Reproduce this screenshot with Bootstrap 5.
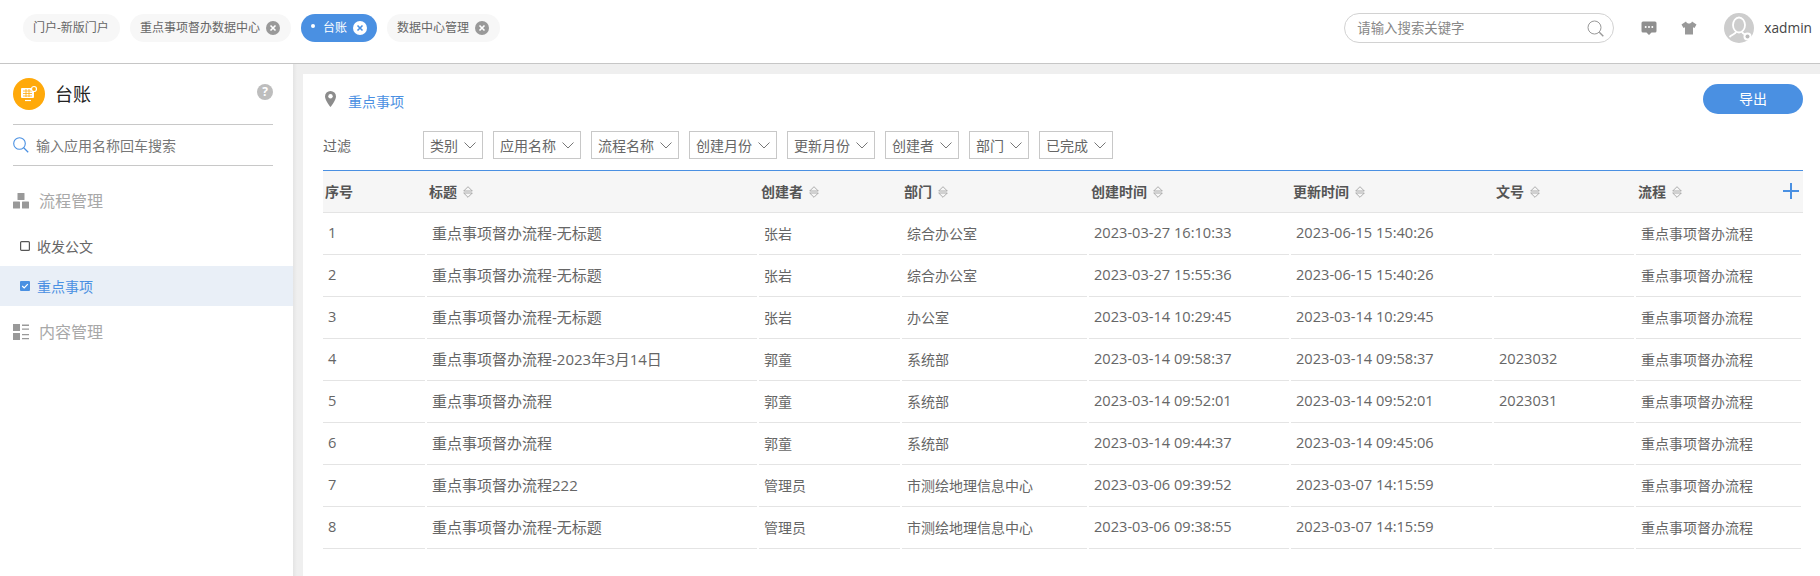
<!DOCTYPE html>
<html lang="zh-CN">
<head>
<meta charset="utf-8">
<title>台账</title>
<link rel="stylesheet" href="https://cdn.jsdelivr.net/npm/bootstrap@5.3.0/dist/css/bootstrap.min.css">
<style>
html,body{height:100%;overflow:hidden}
body{font-family:"Open Sans","Noto Sans CJK SC",sans-serif;font-size:14px;color:#666;background:#fff}
.topbar{height:64px;border-bottom:1px solid #c6c6c6;padding:14px 8px 0 23px}
.tabrow{column-gap:10px}
.tabpill{height:28px;border-radius:14px;background:#f7f7f7;color:#666;font-size:12px;padding:0 11px 0 10px;gap:6px;line-height:28px;white-space:nowrap}
.tabpill.on{background:#4a90e2;color:#fff;padding-right:10px}
.tabx{width:14px;height:14px;flex:none;display:block}
.dotm{width:4px;height:4px;border-radius:50%;background:#fff;margin-right:2px;margin-top:-4px}
.searchbox{width:270px;height:30px;border:1px solid #d2d2d2;border-radius:15px;margin-top:-1px;padding:0 9px 0 12px;color:#888;font-size:13.4px}
.topic{width:16px;height:16px;display:block}
.topicons{height:30px;margin:-1px 0 0 27px;gap:24px}
.userbox{height:30px;margin:-1px 0 0 27px;gap:10px}
.avatarx{width:30px;height:30px;display:block}
.uname{font-size:13.7px;color:#444}
.bodywrap{height:512px}
.sidepane{width:293px;flex:none;background:#fff}
.sidehead{height:61px;margin:0 20px 0 13px;border-bottom:1px solid #c8c8c8;gap:10px}
.logoc{width:32px;height:32px;border-radius:50%;background:#ffa90a;flex:none}
.sidetitle{font-size:18px;color:#222;line-height:32px}
.helpc{width:16px;height:16px;border-radius:50%;background:#bdbdbd;color:#fff;font-size:12px;font-weight:700;line-height:16px;text-align:center;margin-top:-4px}
.sidesearch{height:41px;margin:0 20px 0 13px;border-bottom:1px solid #c8c8c8;gap:7px;font-size:14px;color:#777}
.sec-title{height:20px;margin:25px 0 0 13px;gap:10px;font-size:16px;color:#a8a8a8}
.sec-title.sec-second{margin-top:16px}
.navspacer{height:15px}
.navrow{height:40px;padding-left:20px;gap:7px;font-size:14px;color:#666}
.navrow.active-row{background:#e9eff7;color:#4a90e2}
.gapzone{width:10px;background:linear-gradient(to right,#e4e4e4,#efefef 40%);flex:none}
.mainzone{background:#efefef;padding-top:10px;min-width:0}
.sheet{background:#fff;height:100%;padding:10px 17px 0 20px}
.crumbs{height:30px;color:#4a90e2;font-size:14px;gap:12px;padding-left:2px}
.crumbtext{padding-top:5px}
.export-btn{width:100px;height:30px;border-radius:15px;background:#4a90e2;color:#fff;border:0;padding:0;font-size:14px;line-height:30px}
.filterrow{height:28px;margin-top:17px}
.filterlbl{width:100px;flex:none;font-size:14px;color:#666}
.filtergroup{gap:10px}
.filterchip{height:28px;border:1px solid #c8c8c8;padding:0 6px;gap:6px;font-size:14px;color:#666;background:#fff;white-space:nowrap}
.chev{width:12px;height:7px;flex:none}
.sheet-table{table-layout:fixed;width:1480px;border-collapse:separate;border-spacing:0;margin:11px 0 0;color:#666}
.sheet-table>thead>tr>th{height:43px;border:0;border-top:1px solid #4a90e2;background:linear-gradient(#e4e4e4,#e4e4e4) left bottom/100% 1px no-repeat,#f6f6f6;padding:0 0 2px 2px;font-size:14px;font-weight:700;color:#555;vertical-align:middle;box-shadow:none}
.sheet-table>tbody>tr>td{height:42px;border:0;background:linear-gradient(#e4e4e4,#e4e4e4) left bottom/calc(100% - 2px) 1px no-repeat,#fff;padding:0 0 2px 5px;color:#666;vertical-align:middle;box-shadow:none;white-space:nowrap;font-size:14.6px}
.sheet-table>tbody>tr>td.cn-s{font-size:14px}
.sheet-table>tbody>tr>td.cn-t{font-size:15px}
.sheet-table>tbody>tr>td.cn-w{font-size:14px}
.w1{width:104px}.w2{width:332px}.w3{width:143px}.w4{width:187px}.w5{width:202px}.w6{width:203px}.w7{width:142px}.w8{width:167px}
.sortic{width:10px;height:12px;margin-left:6px;vertical-align:-1px}
.plusic{width:16px;height:16px;display:block;margin-left:auto;margin-right:4px}
</style>
</head>
<body>
<header class="topbar d-flex">
  <div class="tabrow d-flex">
    <div class="tabpill d-flex align-items-center">门户-新版门户</div>
    <div class="tabpill d-flex align-items-center">重点事项督办数据中心
      <svg class="tabx" viewBox="0 0 14 14"><circle cx="7" cy="7" r="7" fill="#999"/><path d="M4.5 4.5l5 5M9.5 4.5l-5 5" stroke="#fff" stroke-width="1.6"/></svg></div>
    <div class="tabpill on d-flex align-items-center"><span class="dotm"></span>台账
      <svg class="tabx" viewBox="0 0 14 14"><circle cx="7" cy="7" r="7" fill="#fff"/><path d="M4.5 4.5l5 5M9.5 4.5l-5 5" stroke="#4a90e2" stroke-width="1.6"/></svg></div>
    <div class="tabpill d-flex align-items-center">数据中心管理
      <svg class="tabx" viewBox="0 0 14 14"><circle cx="7" cy="7" r="7" fill="#999"/><path d="M4.5 4.5l5 5M9.5 4.5l-5 5" stroke="#fff" stroke-width="1.6"/></svg></div>
  </div>
  <div class="ms-auto d-flex align-items-start">
    <div class="searchbox d-flex align-items-center justify-content-between"><span>请输入搜索关键字</span>
      <svg width="17" height="17" viewBox="0 0 17 17" fill="none" stroke="#999"><circle cx="7.5" cy="7.5" r="6.5"/><path d="M12.3 12.3l4 4" stroke-width="1.4"/></svg></div>
    <div class="topicons d-flex align-items-center">
      <svg class="topic" viewBox="0 0 16 16"><path d="M2 1.500h12a1.500 1.500 0 0 1 1.500 1.500v8a1.500 1.500 0 0 1-1.500 1.500h-3.500L8 15l-2.500-2.500H2A1.500 1.500 0 0 1 .5 11V3A1.500 1.500 0 0 1 2 1.500z" fill="#8f8f8f"/><circle cx="4.700" cy="7" r="1" fill="#fff"/><circle cx="8" cy="7" r="1" fill="#fff"/><circle cx="11.300" cy="7" r="1" fill="#fff"/></svg>
      <svg class="topic" viewBox="0 0 16 16"><path d="M5 1.500L.5 4.500l2 3.500L4 7.200V14.500h8V7.200l1.500.8 2-3.500L11 1.500C10.500 3 9.300 3.500 8 3.500S5.500 3 5 1.500z" fill="#999"/></svg>
    </div>
    <div class="userbox d-flex align-items-center">
      <svg class="avatarx" viewBox="0 0 30 30"><circle cx="15" cy="15" r="15" fill="#cdcdcd"/><ellipse cx="15" cy="12" rx="6" ry="7.500" fill="none" stroke="#fff" stroke-width="1.800"/><path d="M12 19c-.5 2-4 2.500-6.500 5M18 19c.5 2 4 2.500 6.500 5" fill="none" stroke="#fff" stroke-width="1.800"/><circle cx="23.500" cy="23.500" r="4" fill="#fff"/><circle cx="23.500" cy="23.500" r="2" fill="#bbb"/></svg>
      <span class="uname">xadmin</span>
    </div>
  </div>
</header>

<div class="bodywrap d-flex">
  <aside class="sidepane">
    <div class="sidehead d-flex align-items-center">
      <div class="logoc d-flex align-items-center justify-content-center">
        <svg width="18" height="18" viewBox="0 0 18 18"><rect x="1" y="3" width="13" height="10" rx="1" fill="#fff"/><path d="M3 6h9M3 8.500h9M3 11h9M6 4v8M9 4v8" stroke="#ffa90a" stroke-width=".8"/><circle cx="14" cy="4" r="2.500" fill="#ffa90a" stroke="#fff" stroke-width="1.200"/><path d="M5 15.500h6" stroke="#fff" stroke-width="1.200"/></svg>
      </div>
      <div class="sidetitle">台账</div>
      <div class="helpc ms-auto">?</div>
    </div>
    <div class="sidesearch d-flex align-items-center">
      <svg width="16" height="16" viewBox="0 0 16 16" fill="none" stroke="#4a90e2"><circle cx="6.500" cy="6.500" r="5.800" stroke-width="1.100"/><path d="M10.700 10.700l4.500 4.500" stroke-width="1.300"/></svg>
      <span>输入应用名称回车搜索</span>
    </div>
    <div class="sec-title d-flex align-items-center">
      <svg width="16" height="16" viewBox="0 0 16 16" fill="#999"><rect x="4.500" y="0" width="7" height="7" rx=".6"/><rect x="0" y="8.500" width="7" height="7" rx=".6"/><rect x="9" y="8.500" width="7" height="7" rx=".6"/></svg>
      <span>流程管理</span>
    </div>
    <div class="navspacer"></div>
    <div class="navrow d-flex align-items-center">
      <svg width="10" height="10" viewBox="0 0 10 10" fill="none" stroke="#555"><rect x=".6" y=".6" width="8.800" height="8.800" rx="1" stroke-width="1.200"/></svg>
      <span>收发公文</span>
    </div>
    <div class="navrow active-row d-flex align-items-center">
      <svg width="10" height="10" viewBox="0 0 10 10"><rect width="10" height="10" rx="1" fill="#4a90e2"/><path d="M2.200 5l2 2 3.600-3.800" fill="none" stroke="#fff" stroke-width="1.200"/></svg>
      <span>重点事项</span>
    </div>
    <div class="sec-title sec-second d-flex align-items-center">
      <svg width="16" height="16" viewBox="0 0 16 16" fill="#999"><rect x="0" y="0" width="7" height="7"/><rect x="0" y="9" width="7" height="7"/><path d="M9 .6h7v1.300H9zM9 4.400h7v1.300H9zM9 10h7v1.300H9zM9 14h7v1.300H9z"/></svg>
      <span>内容管理</span>
    </div>
  </aside>
  <div class="gapzone"></div>
  <main class="mainzone flex-grow-1">
    <div class="sheet">
      <div class="d-flex align-items-center justify-content-between">
        <div class="crumbs d-flex align-items-center">
          <svg width="11" height="16" viewBox="0 0 11 16"><path d="M5.500 0A5.500 5.500 0 0 0 0 5.500C0 9.500 5.500 16 5.500 16S11 9.500 11 5.500A5.500 5.500 0 0 0 5.500 0z" fill="#8c8c8c"/><circle cx="5.500" cy="5.300" r="2.200" fill="#fff"/></svg>
          <span class="crumbtext">重点事项</span>
        </div>
        <button type="button" class="btn export-btn">导出</button>
      </div>
      <div class="filterrow d-flex align-items-center">
        <div class="filterlbl">过滤</div>
        <div class="filtergroup d-flex">
          <div class="filterchip d-flex align-items-center">类别<svg class="chev" viewBox="0 0 12 7" fill="none" stroke="#777"><path d="M.5.5L6 6l5.500-5.500"/></svg></div>
          <div class="filterchip d-flex align-items-center">应用名称<svg class="chev" viewBox="0 0 12 7" fill="none" stroke="#777"><path d="M.5.5L6 6l5.500-5.500"/></svg></div>
          <div class="filterchip d-flex align-items-center">流程名称<svg class="chev" viewBox="0 0 12 7" fill="none" stroke="#777"><path d="M.5.5L6 6l5.500-5.500"/></svg></div>
          <div class="filterchip d-flex align-items-center">创建月份<svg class="chev" viewBox="0 0 12 7" fill="none" stroke="#777"><path d="M.5.5L6 6l5.500-5.500"/></svg></div>
          <div class="filterchip d-flex align-items-center">更新月份<svg class="chev" viewBox="0 0 12 7" fill="none" stroke="#777"><path d="M.5.5L6 6l5.500-5.500"/></svg></div>
          <div class="filterchip d-flex align-items-center">创建者<svg class="chev" viewBox="0 0 12 7" fill="none" stroke="#777"><path d="M.5.5L6 6l5.500-5.500"/></svg></div>
          <div class="filterchip d-flex align-items-center">部门<svg class="chev" viewBox="0 0 12 7" fill="none" stroke="#777"><path d="M.5.5L6 6l5.500-5.500"/></svg></div>
          <div class="filterchip d-flex align-items-center">已完成<svg class="chev" viewBox="0 0 12 7" fill="none" stroke="#777"><path d="M.5.5L6 6l5.500-5.500"/></svg></div>
        </div>
      </div>
      <table class="table sheet-table" id="dataTable">
        <colgroup><col class="w1"><col class="w2"><col class="w3"><col class="w4"><col class="w5"><col class="w6"><col class="w7"><col class="w8"></colgroup>
        <thead><tr id="headRow"></tr></thead>
        <tbody id="bodyRows"></tbody>
      </table>
    </div>
  </main>
</div>
<script src="https://cdn.jsdelivr.net/npm/bootstrap@5.3.0/dist/js/bootstrap.bundle.min.js"></script>
<script>
var sort='<svg class="sortic" viewBox="0 0 10 12" fill="none" stroke="#999" stroke-width=".8"><path d="M.7 5L5 .7 9.300 5zM.7 7L5 11.300 9.300 7z"/></svg>';
var heads=['序号','标题','创建者','部门','创建时间','更新时间','文号','流程'];
document.getElementById('headRow').innerHTML=heads.map(function(h,i){
  var inner=h+(i?sort:'');
  if(i==7){inner='<div class="d-flex align-items-center"><span>'+inner+'</span><svg class="plusic" viewBox="0 0 16 16"><path d="M8 0v16M0 8h16" stroke="#4a90e2" stroke-width="2"/></svg></div>';}
  return '<th>'+inner+'</th>';}).join('');
var F='重点事项督办流程',N=F+'-无标题';
var rows=[
[N,'张岩','综合办公室','2023-03-27 16:10:33','2023-06-15 15:40:26',''],
[N,'张岩','综合办公室','2023-03-27 15:55:36','2023-06-15 15:40:26',''],
[N,'张岩','办公室','2023-03-14 10:29:45','2023-03-14 10:29:45',''],
[F+'-2023年3月14日','郭童','系统部','2023-03-14 09:58:37','2023-03-14 09:58:37','2023032'],
[F,'郭童','系统部','2023-03-14 09:52:01','2023-03-14 09:52:01','2023031'],
[F,'郭童','系统部','2023-03-14 09:44:37','2023-03-14 09:45:06',''],
[F+'222','管理员','市测绘地理信息中心','2023-03-06 09:39:52','2023-03-07 14:15:59',''],
[N,'管理员','市测绘地理信息中心','2023-03-06 09:38:55','2023-03-07 14:15:59','']];
document.getElementById('bodyRows').innerHTML=rows.map(function(r,i){
  return '<tr><td>'+(i+1)+'</td><td class="cn-t">'+r[0]+'</td><td class="cn-w">'+r[1]+'</td><td class="cn-s">'+r[2]+'</td><td>'+r[3]+'</td><td>'+r[4]+'</td><td>'+r[5]+'</td><td class="cn-s">'+F+'</td></tr>';
}).join('');
</script>
</body>
</html>
